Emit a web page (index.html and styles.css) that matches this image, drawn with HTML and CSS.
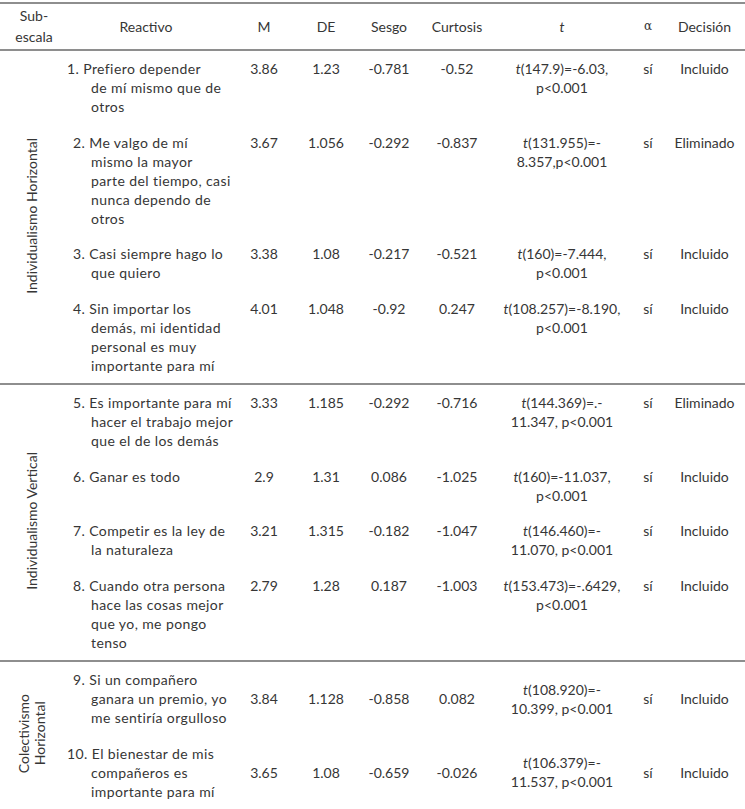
FILE: index.html
```html
<!DOCTYPE html>
<html lang="es">
<head>
<meta charset="utf-8">
<title>Tabla de reactivos</title>
<link rel="stylesheet" href="styles.css">
</head>
<body>
<table class="stats">
  <colgroup>
    <col class="c-sub">
    <col class="c-item">
    <col class="c-m">
    <col class="c-de">
    <col class="c-sesgo">
    <col class="c-curt">
    <col class="c-t">
    <col class="c-alpha">
    <col class="c-dec">
  </colgroup>
  <thead>
    <tr>
      <th class="h-sub">Sub-<br>escala</th>
      <th>Reactivo</th>
      <th>M</th>
      <th>DE</th>
      <th>Sesgo</th>
      <th>Curtosis</th>
      <th><i>t</i></th>
      <th class="alpha">α</th>
      <th>Decisión</th>
    </tr>
  </thead>
  <tbody class="sec-top">
    <tr>
      <th rowspan="4" class="sub"><span class="vert">Individualismo Horizontal</span></th>
      <td class="item item-narrow">1. Prefiero depender<br>de mí mismo que de<br>otros</td>
      <td>3.86</td><td>1.23</td><td>-0.781</td><td>-0.52</td>
      <td><i>t</i>(147.9)=-6.03,<br>p&lt;0.001</td><td>sí</td><td>Incluido</td>
    </tr>
    <tr>
      <td class="item">2. Me valgo de mí<br>mismo la mayor<br>parte del tiempo, casi<br>nunca dependo de<br>otros</td>
      <td>3.67</td><td>1.056</td><td>-0.292</td><td>-0.837</td>
      <td><i>t</i>(131.955)=-<br>8.357,p&lt;0.001</td><td>sí</td><td>Eliminado</td>
    </tr>
    <tr>
      <td class="item">3. Casi siempre hago lo<br>que quiero</td>
      <td>3.38</td><td>1.08</td><td>-0.217</td><td>-0.521</td>
      <td><i>t</i>(160)=-7.444,<br>p&lt;0.001</td><td>sí</td><td>Incluido</td>
    </tr>
    <tr>
      <td class="item">4. Sin importar los<br>demás, mi identidad<br>personal es muy<br>importante para mí</td>
      <td>4.01</td><td>1.048</td><td>-0.92</td><td>0.247</td>
      <td><i>t</i>(108.257)=-8.190,<br>p&lt;0.001</td><td>sí</td><td>Incluido</td>
    </tr>
  </tbody>
  <tbody class="sec-top">
    <tr>
      <th rowspan="4" class="sub"><span class="vert">Individualismo Vertical</span></th>
      <td class="item">5. Es importante para mí<br>hacer el trabajo mejor<br>que el de los demás</td>
      <td>3.33</td><td>1.185</td><td>-0.292</td><td>-0.716</td>
      <td><i>t</i>(144.369)=.-<br>11.347, p&lt;0.001</td><td>sí</td><td>Eliminado</td>
    </tr>
    <tr>
      <td class="item">6. Ganar es todo</td>
      <td>2.9</td><td>1.31</td><td>0.086</td><td>-1.025</td>
      <td><i>t</i>(160)=-11.037,<br>p&lt;0.001</td><td>sí</td><td>Incluido</td>
    </tr>
    <tr>
      <td class="item">7. Competir es la ley de<br>la naturaleza</td>
      <td>3.21</td><td>1.315</td><td>-0.182</td><td>-1.047</td>
      <td><i>t</i>(146.460)=-<br>11.070, p&lt;0.001</td><td>sí</td><td>Incluido</td>
    </tr>
    <tr>
      <td class="item">8. Cuando otra persona<br>hace las cosas mejor<br>que yo, me pongo<br>tenso</td>
      <td>2.79</td><td>1.28</td><td>0.187</td><td>-1.003</td>
      <td><i>t</i>(153.473)=-.6429,<br>p&lt;0.001</td><td>sí</td><td>Incluido</td>
    </tr>
  </tbody>
  <tbody class="sec-mid">
    <tr>
      <th rowspan="2" class="sub"><span class="vert">Colectivismo<br>Horizontal</span></th>
      <td class="item">9. Si un compañero<br>ganara un premio, yo<br>me sentiría orgulloso</td>
      <td>3.84</td><td>1.128</td><td>-0.858</td><td>0.082</td>
      <td><i>t</i>(108.920)=-<br>10.399, p&lt;0.001</td><td>sí</td><td>Incluido</td>
    </tr>
    <tr>
      <td class="item item-narrow">10. El bienestar de mis<br>compañeros es<br>importante para mí</td>
      <td>3.65</td><td>1.08</td><td>-0.659</td><td>-0.026</td>
      <td><i>t</i>(106.379)=-<br>11.537, p&lt;0.001</td><td>sí</td><td>Incluido</td>
    </tr>
  </tbody>
</table>
</body>
</html>
```

FILE: styles.css
```css
html, body {
  margin: 0;
  padding: 0;
  background: #ffffff;
}

body {
  font-family: Lato, "Open Sans", "Liberation Sans", sans-serif;
  font-size: 14px;
  color: #363636;
}

.stats {
  border-collapse: collapse;
  width: 745px;
  margin-top: 2px;
  table-layout: fixed;
}

.c-sub { width: 60px; }
.c-item { width: 172px; }
.c-m { width: 64px; }
.c-de { width: 60px; }
.c-sesgo { width: 66px; }
.c-curt { width: 70px; }
.c-t { width: 140px; }
.c-alpha { width: 32px; }
.c-dec { width: 81px; }

.stats thead tr {
  border-top: 2px solid #8e8e8e;
  border-bottom: 2px solid #8e8e8e;
}

.stats th {
  font-weight: normal;
}

.stats thead th {
  line-height: 21px;
  padding: 1px 0 2px;
  text-align: center;
  vertical-align: middle;
}

.stats thead .h-sub {
  padding-left: 8px;
}

.stats thead .alpha {
  font-family: "DejaVu Serif", "Liberation Serif", serif;
  font-size: 12px;
}

.stats td {
  line-height: 19px;
  padding: 8px 0 8.5px;
  text-align: center;
  vertical-align: top;
  white-space: nowrap;
}

.sec-top + .sec-top,
.sec-mid {
  border-top: 2px solid #8e8e8e;
}

.sec-mid td {
  vertical-align: middle;
}

.stats td.item {
  text-align: left;
  padding-left: 31px;
  text-indent: -18px;
  letter-spacing: 0.4px;
  vertical-align: top;
}

.stats td.item-narrow {
  text-indent: -24px;
}

.sub {
  text-align: center;
  vertical-align: middle;
  padding: 0 0 0 4px;
}

.vert {
  display: inline-block;
  writing-mode: vertical-rl;
  transform: rotate(180deg);
  line-height: 16px;
  text-align: center;
  white-space: nowrap;
}
```
